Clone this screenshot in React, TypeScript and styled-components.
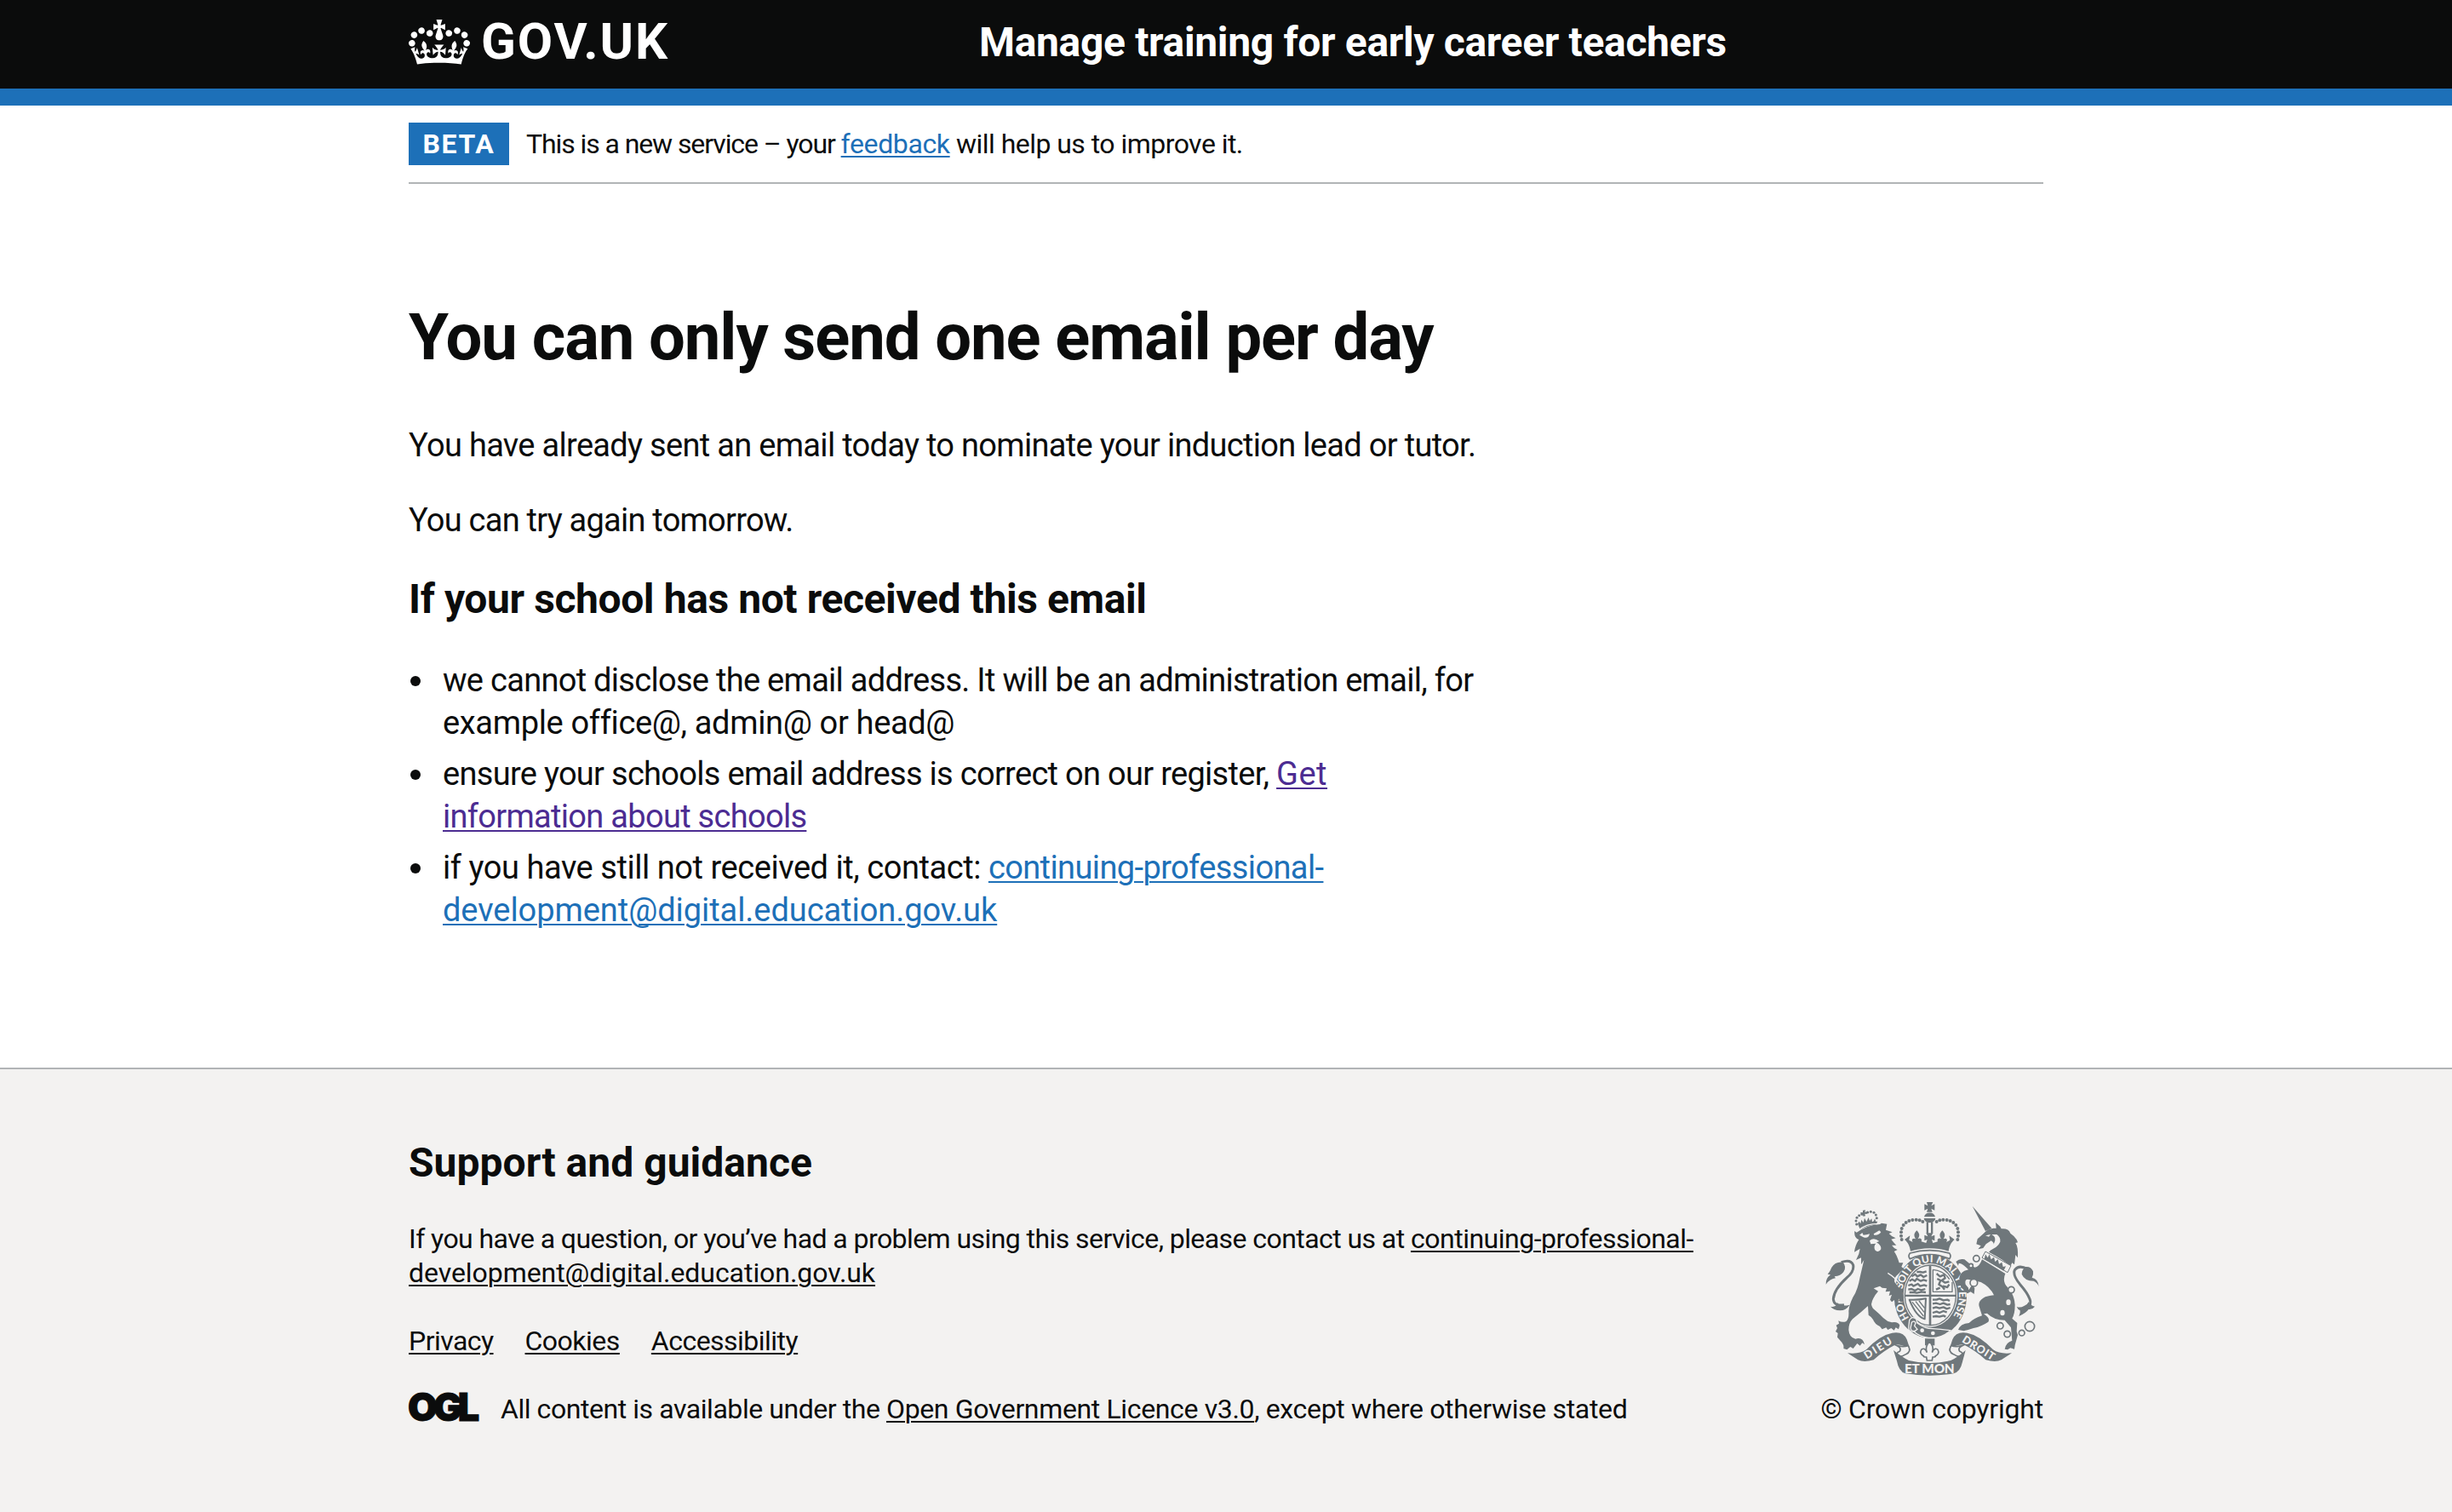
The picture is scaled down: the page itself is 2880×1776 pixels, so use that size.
import React from 'react';
import styled, { createGlobalStyle } from 'styled-components';

const INK = '#0b0c0c';
const BLUE = '#1d70b8';
const VISITED = '#4c2c92';
const RULE = '#b1b4b6';
const PANEL = '#f3f2f1';
const CREST = '#6f777b';

const GlobalStyle = createGlobalStyle`
  *, *::before, *::after { box-sizing: border-box; }
  body {
    margin: 0;
    background: #fff;
    color: ${INK};
    font-family: Roboto, "Liberation Sans", Arial, sans-serif;
    -webkit-font-smoothing: antialiased;
  }
`;

const Page = styled.div`
  min-height: 1776px;
  display: flex;
  flex-direction: column;
`;

const Width = styled.div`
  width: 1920px;
  margin: 0 auto;
`;

const Line = styled.span<{ $track: number }>`
  letter-spacing: ${p => p.$track}px;
  white-space: pre;
`;

const Link = styled.a<{ $tone?: string; $track?: number }>`
  color: ${p => p.$tone ?? INK};
  letter-spacing: ${p => p.$track ?? 0}px;
  white-space: pre;
  text-decoration: underline;
  text-decoration-thickness: 2px;
  text-underline-offset: 3px;
`;

/* Header */

const Header = styled.header`
  background: ${INK};
  border-bottom: 20px solid ${BLUE};
  height: 124px;
`;

const HeaderRow = styled(Width)`
  display: flex;
  align-items: flex-start;
`;

const Brand = styled.a`
  display: flex;
  width: 670px;
  color: #fff;
`;

const CrownMark = styled.svg`
  display: block;
  width: 72px;
  height: 53px;
  margin-top: 23px;
`;

const BrandName = styled.span`
  margin: 14px 0 0 13px;
  font-size: 60px;
  line-height: 70px;
  font-weight: 700;
  letter-spacing: 1.9px;
`;

const ServiceName = styled.a`
  margin-top: 20px;
  color: #fff;
  font-size: 48px;
  line-height: 60px;
  font-weight: 700;
`;

/* Phase banner */

const Phase = styled(Width)`
  display: flex;
  align-items: center;
  gap: 20px;
  height: 92px;
  border-bottom: 2px solid ${RULE};
`;

const PhaseTag = styled.strong`
  width: 118px;
  height: 50px;
  background: ${BLUE};
  color: #fff;
  font-size: 32px;
  line-height: 50px;
  letter-spacing: 1.6px;
  text-align: center;
`;

const PhaseText = styled.span`
  font-size: 32px;
  line-height: 40px;
`;

/* Main content */

const Main = styled(Width)`
  flex: 1;
  padding: 140px 0 160px;
`;

const Title = styled.h1`
  margin: 0 0 62px;
  font-size: 76px;
  line-height: 80px;
  font-weight: 700;
`;

const Paragraph = styled.p`
  margin: 0 0 38px;
  font-size: 38px;
  line-height: 50px;
`;

const Heading = styled.h2<{ $gap: number }>`
  margin: 0 0 ${p => p.$gap}px;
  font-size: 48px;
  line-height: 60px;
  font-weight: 700;
`;

const List = styled.ul`
  margin: 0;
  padding: 0;
  list-style: none;
  display: flex;
  flex-direction: column;
  gap: 10px;
  font-size: 38px;
  line-height: 50px;
`;

const Item = styled.li`
  display: flex;
  gap: 26px;
  padding-left: 2px;

  &::before {
    content: '';
    flex: none;
    width: 12px;
    height: 12px;
    margin-top: 20px;
    border-radius: 50%;
    background: ${INK};
  }
`;

/* Footer */

const Footer = styled.footer`
  height: 522px;
  border-top: 2px solid ${RULE};
  background: ${PANEL};
  font-size: 32px;
  line-height: 40px;
`;

const FooterRow = styled(Width)`
  display: flex;
  justify-content: space-between;
  align-items: flex-end;
  padding-top: 80px;
`;

const Contact = styled.p`
  margin: 0 0 40px;
`;

const Nav = styled.nav`
  display: flex;
  gap: 37px;
  margin-bottom: 40px;
`;

const Licence = styled.div`
  display: flex;
  height: 40px;
`;

const OglMark = styled.span`
  width: 108px;
  margin-top: -2px;
  font-family: Inter, sans-serif;
  font-size: 45px;
  line-height: 40px;
  font-weight: 900;
  letter-spacing: -5px;
  text-indent: -1px;
  -webkit-text-stroke: 1px ${INK};
`;

const Copyright = styled.a`
  display: flex;
  flex-direction: column;
  align-items: flex-end;
  gap: 19px;
`;

const CrestArt = styled.svg`
  display: block;
  width: 250px;
  height: 204px;
  margin-right: 6px;
  overflow: visible;
`;

const CrestText = styled.text`
  font-family: Lato, sans-serif;
  font-weight: 900;
  fill: ${PANEL};
`;

function Crown() {
  return (
    <CrownMark viewBox="0 0 132 97" fill="currentColor" aria-hidden="true">
      <path
        fillRule="evenodd"
        d="M25 30.2c3.5 1.5 7.7-.2 9.1-3.7 1.5-3.6-.2-7.8-3.9-9.2-3.6-1.4-7.6.3-9.1 3.9-1.4 3.5.3 7.5 3.9 9zM9 39.5c3.6 1.5 7.8-.2 9.2-3.7 1.5-3.6-.2-7.8-3.9-9.1-3.6-1.5-7.6.2-9.1 3.8-1.4 3.5.3 7.5 3.8 9zM4.4 57.2c3.5 1.5 7.7-.2 9.1-3.8 1.5-3.6-.2-7.7-3.9-9.1-3.5-1.5-7.6.3-9.1 3.8-1.4 3.5.3 7.6 3.9 9.1zm38.3-21.4c3.5 1.5 7.7-.2 9.1-3.8 1.5-3.6-.2-7.7-3.9-9.1-3.6-1.5-7.6.3-9.1 3.8-1.3 3.6.4 7.7 3.9 9.1zm64.4-5.6c-3.6 1.5-7.8-.2-9.1-3.7-1.5-3.6.2-7.8 3.8-9.2 3.6-1.4 7.7.3 9.2 3.9 1.3 3.5-.4 7.5-3.9 9zm15.9 9.3c-3.6 1.5-7.7-.2-9.1-3.7-1.5-3.6.2-7.8 3.7-9.1 3.6-1.5 7.7.2 9.2 3.8 1.5 3.5-.3 7.5-3.8 9zm4.7 17.7c-3.6 1.5-7.8-.2-9.2-3.8-1.5-3.6.2-7.7 3.9-9.1 3.6-1.5 7.7.3 9.2 3.8 1.3 3.5-.4 7.6-3.9 9.1zM89.3 35.8c-3.6 1.5-7.8-.2-9.2-3.8-1.4-3.6.2-7.7 3.9-9.1 3.6-1.5 7.7.3 9.2 3.8 1.4 3.6-.3 7.7-3.9 9.1zM69.7 17.7l8.9 4.7V9.3l-8.9 2.8c-.2-.3-.5-.6-.9-.9L72.4 0H59.6l3.5 11.2c-.3.3-.6.5-.9.9l-8.8-2.8v13.1l8.8-4.7c.3.3.6.7.9.9l-5 15.4v.1c-.2.8-.4 1.6-.4 2.4 0 4.1 3.1 7.5 7 8.1h.2c.3 0 .7.1 1 .1.4 0 .7 0 1-.1h.2c4-.6 7.1-4.1 7.1-8.1 0-.8-.1-1.7-.4-2.4V34l-5.1-15.4c.4-.2.7-.6 1-.9zM66 92.8c16.9 0 32.8 1.1 47.1 3.2 4-16.9 8.9-26.7 14-33.5l-9.6-3.4c1 4.9 1.1 7.2 0 10.2-1.5-1.4-3-4.3-4.2-8.7L108.6 76c2.8-2 5-3.2 7.5-3.3-4.4 9.4-10 11.9-13.6 11.2-4.3-.8-6.3-4.6-5.6-7.9 1-4.7 5.7-5.9 8-.5 4.3-8.7-3-11.4-7.6-8.8 7.1-7.2 7.9-13.5 2.1-21.1-8 6.1-8.1 12.3-4.5 20.8-4.7-5.4-12.1-2.5-9.5 6.2 3.4-5.2 7.9-2 7.2 3.1-.6 4.3-6.4 7.8-13.5 7.2-10.3-.9-10.9-8-11.2-13.8 2.5-.5 7.1 1.8 11 7.3L80.2 60c-4.1 4.4-8 5.3-12.3 5.4 1.4-4.4 8-11.6 8-11.6H55.5s6.4 7.2 7.9 11.6c-4.2-.1-8-1-12.3-5.4l1.4 16.4c3.9-5.5 8.5-7.7 10.9-7.3-.3 5.8-.9 12.8-11.1 13.8-7.2.6-12.9-2.9-13.5-7.2-.7-5 3.8-8.3 7.1-3.1 2.7-8.7-4.6-11.6-9.4-6.2 3.7-8.5 3.6-14.7-4.6-20.8-5.8 7.6-5 13.9 2.2 21.1-4.7-2.6-11.9.1-7.7 8.8 2.3-5.5 7.1-4.2 8.1.5.7 3.3-1.3 7.1-5.7 7.9-3.5.7-9-1.8-13.5-11.2 2.5.1 4.7 1.3 7.5 3.3l-4.7-15.4c-1.2 4.4-2.7 7.2-4.3 8.7-1.1-3-.9-5.3 0-10.2l-9.5 3.4c5 6.9 9.9 16.7 14 33.5 14.8-2.1 30.8-3.2 47.7-3.2z"
      />
    </CrownMark>
  );
}

const archBeads = [
  [339, 168], [337, 155], [337, 142], [339, 129], [345, 117], [354, 108], [365, 102], [377, 99], [390, 98], [402, 100], [413, 105],
];
const lionBeads = [
  [180, 114], [178, 102], [181, 91], [189, 83], [199, 79], [219, 72], [230, 70], [241, 73], [248, 81], [251, 92],
];
const chainRings = [
  [602, 235, 11], [583, 260, 7], [593, 320, 13], [725, 345, 11], [686, 472, 11], [711, 501, 11], [762, 497, 10], [790, 474, 17],
];

function Crest() {
  return (
    <CrestArt viewBox="70 36 750 612" fill={CREST} aria-hidden="true">
      {/* imperial crown */}
      <path d="M427 36h22l-6 13 12-6v22l-12-6 4 12h-20l4-12-12 6V43l12 6z" />
      <path d="M418 88a20 19 0 0 1 39 0z" />
      <path d="M417 93h41a20 15 0 0 1-41 0z" />
      <path d="M426 106h7v40h-7zM442 106h7v40h-7z" />
      {archBeads.map(([x, y]) => (
        <g key={`${x}-${y}`}>
          <circle cx={x} cy={y} r="6" />
          <circle cx={875 - x} cy={y} r="6" />
        </g>
      ))}
      <path d="M392 136c12 12 10 20 4 30 8-6 16 0 12 9l17 5 4-12-10 4v-20l12 5-6-12h24l-6 12 12-5v20l-10-4 4 12 17-5c-4-9 4-15 12-9-6-10-8-18 4-30 12 12 10 20 4 30 9-6 17 2 10 11l13-7-3-16 19 14c-12 10-18 22-21 41-40-14-94-14-134 0-3-19-9-31-21-41l19-14-3 16 13 7c-7-9 1-17 10-11-6-10-8-18 4-30z" />
      <path d="M368 216q70-20 139 0 8 10 0 20-70-30-139 0-8-10 0-20z" fill={PANEL} stroke={CREST} strokeWidth="5" />

      {/* garter */}
      <ellipse cx="440" cy="367" rx="128" ry="148" />
      <path id="garter-line" d="M365 444A100 118 0 1 1 511 450" fill="none" />
      <ellipse cx="440" cy="364" rx="95" ry="112" fill={PANEL} />
      <ellipse cx="440" cy="364" rx="90" ry="106" fill={PANEL} stroke={CREST} strokeWidth="4" />
      <CrestText fontSize="36">
        <textPath href="#garter-line" textLength="500" lengthAdjust="spacing">HONI SOIT QUI MAL Y PENSE</textPath>
      </CrestText>
      <path d="M435 260h8v212h-8zM350 362h180v7H350z" />

      {/* quarterings */}
      <g fill="none" stroke={CREST} strokeWidth="7" strokeLinejoin="round">
        <path d="M374 298l12-8 8 8 12-6 10 8 12-6M366 314l10-6 10 6 6-8 14 8 10-4 12 4M362 330l12-4 6 6 16-8 8 8 14-4 10 4M362 344l12-2 12 6 10-6 12 4 14-4M366 354l18 0 8 2 18-4 14 2M392 282l12 0 10 2 12-4" />
        <path d="M449 274v78h68V318M449 274q40 4 58 34" strokeWidth="4" />
        <path d="M462 288l12 10 14-6 4 12-12 8 12 8 14-4M464 306l12 6-6 14 12 8 8 10M484 332l16 4 6-10M460 344l14-6" />
        <path d="M366 380q28 2 58-4l-4 72q-30-8-54-68z" strokeWidth="6" />
        <path d="M376 388l40 50M388 386l30 38M400 384l20 26" strokeWidth="4" />
        <path d="M448 380l14 0 10-4 14 6 14-2 8 4M448 394l12-2 14 4 12-4 14 6 10-2M448 410l12-4 12 4 14-4 12 6 12-4M448 426l14-4 10 4 14-6 12 4M448 440l12-2 12 2 14-4 8 4" />
      </g>

      {/* garter buckle and strap */}
      <path d="M366 452q10-16 24-4l4 14q26 20 54 20 34 2 62 6-30 30-76 26-34-4-52-22-22 2-18-20z" stroke={PANEL} strokeWidth="4" />
      <path d="M374 460q10-8 14 2l-4 10 10 12-8 6q-14 2-16-10z" fill="none" stroke={PANEL} strokeWidth="4" />
      <circle cx="411" cy="488" r="7" fill={PANEL} />
      <circle cx="449" cy="498" r="7" fill={PANEL} />

      {/* lion */}
      {lionBeads.map(([x, y]) => <circle key={`${x}-${y}`} cx={x} cy={y} r="4.5" />)}
      <path d="M202 65l9-1-2 8 7-3 1 9-8-1 2 8-8 1-1-8-7 2-1-8 8 1z" />
      <path d="M184 112l5-8 5 8 3-14 7 10 4-16 7 13 7-15 4 12 7-8 2 12 6-4 3-8 4 10 6 0-6 12q-28 2-56 16z" />
      <path d="M173 138L180 143Q215 118 262 114L268 110L287 113L283 134L306 142L294 147Q306 160 318 163L302 167Q312 180 320 188L304 188Q312 200 324 204L312 210Q322 222 330 250L344 250L338 264L346 270L326 290Q310 302 314 318L340 352Q350 374 342 388L334 388L328 376L326 396L316 392L314 380L304 388L298 380L304 362L294 366L298 350L282 352L286 340L270 338L262 332L240 340L256 350Q236 372 232 396Q234 410 246 418L262 432Q274 446 290 456L304 460Q326 456 332 470L328 484L318 478L312 488L302 480L290 486L284 478L270 484L262 474Q244 466 238 450Q230 438 222 434L220 402Q196 424 166 448Q152 462 152 486Q154 514 176 518Q202 510 208 538L200 532L192 542L182 534L168 552L158 546L146 556L134 552Q136 540 128 530L112 512L114 498L106 492L112 480L108 470L118 464L116 454Q130 462 144 456Q154 446 152 420Q154 396 168 370Q184 346 192 300L206 240L196 256L196 232L178 240Q190 220 192 200L172 212Q174 190 188 168Q170 162 173 138Z" />
      <path d="M186 134q30-22 68-22l3-8" fill="none" stroke={PANEL} strokeWidth="4" />
      <path d="M190 152l10-8 4 8q10 0 22-4-4 18-22 12z" fill={PANEL} />
      <path d="M240 148l20-12 6 6q-8 12-24 10z" fill={PANEL} />
      <path d="M226 172q14-14 34 2l-10 4q18 10 16 24-8 14-20 4-8-14 2-24l-18 2z" fill={PANEL} />
      <path d="M290 286q26 16 42 38" fill="none" stroke={PANEL} strokeWidth="4" />
      <path d="M126 248Q160 236 168 258Q172 280 146 302Q100 344 98 378Q100 404 136 398" fill="none" stroke={CREST} strokeWidth="9" />
      <path d="M72 326q-2-20 16-34l-10-2q8-8 14-24 14-22 40-18 14 16 2 34-10 14-32 16l4 6q-20 2-34 22z" />
      <path d="M88 404q20 4 24-14 10 16 44 8-14 20-34 20-24-2-34-14z" />

      {/* unicorn */}
      <path d="M588 50L656 128L634 138Z" />
      <path d="M602 184L606 166L628 146Q640 130 662 128L672 128L670 108L686 122L690 130Q716 128 722 146L734 156Q746 168 748 178L740 180Q750 194 748 232L740 222L736 256L728 250L722 262Q700 240 646 212L662 196Q668 180 654 172L636 184L626 198L608 202L618 190Z" />
      <path d="M656 150Q676 160 664 182Q656 196 640 208Q676 200 686 176Q688 160 674 150Z" fill={PANEL} />
      <path d="M634 154L652 150L646 158Z" fill={PANEL} />
      <path d="M634 210l90 50-12 24-90-52z" fill={PANEL} stroke={CREST} strokeWidth="3" />
      <path d="M630 236l4-16 8 12 6-12 6 18 10-8 4 16 10-8 4 16 10-6 4 16 10-2-8 16z" />
      <path d="M622 238L704 288Q692 316 712 336Q736 362 738 398Q738 430 728 446L746 462L744 492L748 504L738 540L736 554L722 550L712 556L702 554Q706 530 728 524L724 478L702 452Q664 452 640 428L628 430Q652 446 644 458Q620 474 592 480Q566 488 558 490L538 486Q546 464 576 462Q592 446 622 436L614 410Q604 388 626 374Q640 366 664 364Q650 334 618 318L590 312L572 308Q560 308 564 326L574 338L574 356Q560 356 554 340L548 338L542 306Q542 288 560 278L574 274L566 266Q550 250 540 252L538 260L530 246Q542 234 560 238Q576 252 596 266Q612 266 622 238Z" />
      <path d="M588 326l8 14-2 20-12-8-12 6-8-16 14 2z" />
      {chainRings.map(([x, y, r]) => (
        <ellipse key={`${x}-${y}`} cx={x} cy={y} rx={r} ry={r} fill={PANEL} stroke={CREST} strokeWidth="5" />
      ))}
      <ellipse cx="715" cy="389" rx="8" ry="10" fill={PANEL} />
      <ellipse cx="694" cy="426" rx="8" ry="10" fill={PANEL} />
      <path d="M782 272Q752 256 738 274Q728 292 756 326Q786 360 792 384Q794 406 776 412" fill="none" stroke={CREST} strokeWidth="9" />
      <path d="M822 334q-4-14-18-20-32 0-42-24 0-16 14-26 18-2 26 16 2 14-4 22 22 4 24 32z" />
      <path d="M744 404q12 6 26-2 12-4 16-14 4 12 22 16-10 12-22 10-8 12-34 24 6-12 4-20-8-4-12-14z" />

      {/* ribbon */}
      {['left', 'right'].map(side => (
        <g key={side} transform={side === 'right' ? 'matrix(-1 0 0 1 875 0)' : undefined}>
          <path d="M148 568Q190 573 214 556Q262 505 305 497Q345 490 357 520Q362 535 370 560Q350 538 318 538Q275 560 240 592Q205 602 185 592Z" />
          <path d="M310 536q26 14 52 6 12 22-8 30-18 12-32 8-6-12 10-18 10-14-22-26z" fill={PANEL} stroke={CREST} strokeWidth="5" />
        </g>
      ))}
      <path d="M310 558q30 24 54 36 74 18 148 0 26-12 52-36l-12 44q-6 30-30 38-84 14-170 0-24-8-30-44z" />
      <CrestText fontSize="38" transform="translate(216 590) rotate(-32)" textLength="108">DIEU</CrestText>
      <CrestText fontSize="38" transform="translate(549 527) rotate(32)" textLength="128">DROIT</CrestText>
      <CrestText fontSize="46" x="349" y="639" textLength="176">ET MON</CrestText>

      {/* fleur-de-lis */}
      <path d="M421 517h34v24h-34z" />
      <path d="M437 528q18 18 9 38 8-20 20-10 8 14-8 22 2 4-10 4l-2 12h-18l-2-12q-12 0-10-4-16-8-8-22 12-10 20 10-9-20 9-38z" fill={PANEL} stroke={CREST} strokeWidth="5" />
    </CrestArt>
  );
}

export default function App() {
  return (
    <Page>
      <GlobalStyle />
      <Header>
        <HeaderRow>
          <Brand>
            <Crown />
            <BrandName>GOV.UK</BrandName>
          </Brand>
          <ServiceName>
            <Line $track={-0.34}>Manage training for early career teachers</Line>
          </ServiceName>
        </HeaderRow>
      </Header>

      <Phase>
        <PhaseTag>BETA</PhaseTag>
        <PhaseText>
          <Line $track={-1.09}>This is a new service – your </Line>
          <Link $tone={BLUE} $track={-0.38}>feedback</Link>
          <Line $track={-0.54}> will help us to improve it.</Line>
        </PhaseText>
      </Phase>

      <Main as="main">
        <Title><Line $track={-1.09}>You can only send one email per day</Line></Title>
        <Paragraph>
          <Line $track={-0.69}>You have already sent an email today to nominate your induction lead or tutor.</Line>
        </Paragraph>
        <Paragraph><Line $track={-0.76}>You can try again tomorrow.</Line></Paragraph>
        <Heading $gap={40}><Line $track={-0.41}>If your school has not received this email</Line></Heading>
        <List>
          <Item>
            <div>
              <Line $track={-0.71}>we cannot disclose the email address. It will be an administration email, for</Line>
              <br />
              <Line $track={-0.34}>example office@, admin@ or head@</Line>
            </div>
          </Item>
          <Item>
            <div>
              <Line $track={-0.7}>ensure your schools email address is correct on our register, </Line>
              <Link $tone={VISITED} $track={0.5}>Get</Link>
              <br />
              <Link $tone={VISITED} $track={-0.7}>information about schools</Link>
            </div>
          </Item>
          <Item>
            <div>
              <Line $track={-0.45}>if you have still not received it, contact: </Line>
              <Link $tone={BLUE} $track={-0.61}>continuing-professional-</Link>
              <br />
              <Link $tone={BLUE} $track={-0.06}>development@digital.education.gov.uk</Link>
            </div>
          </Item>
        </List>
      </Main>

      <Footer>
        <FooterRow>
          <div>
            <Heading $gap={39}><Line $track={0.02}>Support and guidance</Line></Heading>
            <Contact>
              <Line $track={-0.57}>
                If you have a question, or you’ve had a problem using this service, please contact us at{' '}
              </Line>
              <Link $track={-0.49}>continuing-professional-</Link>
              <br />
              <Link $track={-0.06}>development@digital.education.gov.uk</Link>
            </Contact>
            <Nav>
              <Link $track={-0.55}>Privacy</Link>
              <Link $track={-0.5}>Cookies</Link>
              <Link $track={-0.52}>Accessibility</Link>
            </Nav>
            <Licence>
              <OglMark>OGL</OglMark>
              <span>
                <Line $track={-0.44}>All content is available under the </Line>
                <Link $track={-0.36}>Open Government Licence v3.0</Link>
                <Line $track={-0.33}>, except where otherwise stated</Line>
              </span>
            </Licence>
          </div>
          <Copyright>
            <Crest />
            <Line $track={-0.2}>© Crown copyright</Line>
          </Copyright>
        </FooterRow>
      </Footer>
    </Page>
  );
}
